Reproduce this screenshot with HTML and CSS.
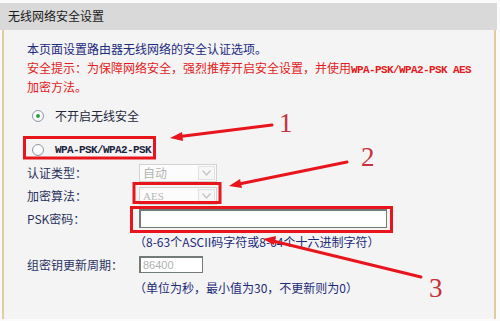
FILE: index.html
```html
<!DOCTYPE html>
<html lang="zh-CN">
<head>
<meta charset="utf-8">
<title>无线网络安全设置</title>
<link rel="stylesheet" href="styles.css">
</head>
<body>
<div class="page">
  <div class="header">无线网络安全设置</div>
  <div class="panel">
    <div class="desc">
      <p class="blue">本页面设置路由器无线网络的安全认证选项。</p>
      <p class="red">安全提示：为保障网络安全，强烈推荐开启安全设置，并使用<span class="mono">WPA-PSK/WPA2-PSK AES</span></p>
      <p class="red">加密方法。</p>
    </div>
    <div class="radio-row first"><span class="radio checked"></span><span class="rlabel">不开启无线安全</span></div>
    <div class="radio-row second"><span class="radio"></span><span class="mono rlabel">WPA-PSK/WPA2-PSK</span></div>
    <div class="form">
      <div class="label">认证类型：</div>
      <div class="field"><span class="select"><span class="val">自动</span><span class="arrow"><svg width="9" height="6" viewBox="0 0 9 6"><polyline points="0.5,0.5 4.5,5 8.5,0.5" fill="none" stroke="#c4c4c4" stroke-width="1.3"/></svg></span></span></div>
      <div class="label">加密算法：</div>
      <div class="field"><span class="select"><span class="val serif">AES</span><span class="arrow"><svg width="9" height="6" viewBox="0 0 9 6"><polyline points="0.5,0.5 4.5,5 8.5,0.5" fill="none" stroke="#c4c4c4" stroke-width="1.3"/></svg></span></span></div>
      <div class="label">PSK密码：</div>
      <div class="field"><span class="input wide"></span></div>
      <div class="label"></div>
      <div class="field hint">（8-63个ASCII码字符或8-64个十六进制字符）</div>
      <div class="label">组密钥更新周期：</div>
      <div class="field"><span class="input short">86400</span></div>
      <div class="label"></div>
      <div class="field hint">（单位为秒，最小值为30，不更新则为0）</div>
    </div>
  </div>
  <svg class="annot" width="500" height="321" viewBox="0 0 500 321">
    <g fill="none" stroke="#e8161c" stroke-width="3">
      <rect x="24.5" y="137.5" width="130" height="20.5"/>
      <rect x="134" y="183.5" width="86" height="19"/>
      <rect x="131.5" y="207.5" width="260" height="24"/>
    </g>
    <g stroke="#e8161c" stroke-width="3" stroke-linecap="round">
      <line x1="272" y1="125" x2="180" y2="136.5"/>
      <line x1="347" y1="162" x2="239" y2="184"/>
      <line x1="421" y1="277" x2="273" y2="241"/>
    </g>
    <g fill="#e8161c">
      <polygon points="170,138 182,132 183,141"/>
      <polygon points="229,186 240,179 242,188"/>
      <polygon points="263,239 276,236 274,245"/>
    </g>
    <g class="num" fill="#c8323a">
      <text x="279" y="132">1</text>
      <text x="361" y="166">2</text>
      <text x="429" y="297">3</text>
    </g>
  </svg>
</div>
</body>
</html>
```

FILE: styles.css
```css
html, body {
  margin: 0;
  padding: 0;
  background: #ffffff;
}
body {
  font-family: "Noto Sans CJK SC", "Noto Sans", sans-serif;
  font-size: 12px;
  color: #222;
}
.page {
  position: relative;
  width: 500px;
  height: 321px;
  padding-top: 3px;
  box-sizing: border-box;
  background: #fbfbfb;
}
.header {
  height: 27px;
  line-height: 25px;
  padding-left: 8px;
  margin-right: 3px;
  background: #d9d9d9;
  color: #1a1a1a;
  font-size: 12px;
}
.panel {
  margin: 0 4px 0 2px;
  border-left: 2px solid #e2cc9f;
  border-right: 2px solid #e2cc9f;
  background: #f4f4f4;
  padding: 9px 0 19px 0;
  height: 289px;
  box-sizing: border-box;
}
.desc {
  padding-left: 23px;
}
.desc p {
  margin: 0;
  line-height: 19px;
  height: 19px;
  white-space: nowrap;
}
.blue { color: #1c2a80; }
.red { color: #e31b22; }
.mono {
  font-family: "Liberation Mono", monospace;
  font-size: 11px;
  letter-spacing: -0.6px;
  font-weight: bold;
}
.radio-row {
  display: flex;
  align-items: center;
  height: 23px;
  padding-left: 28px;
}
.radio-row.first { margin-top: 8px; }
.radio-row.second { margin-top: 11px; }
.radio {
  width: 10px;
  height: 10px;
  border-radius: 50%;
  border: 1px solid #8d9aa6;
  background: radial-gradient(circle at 50% 40%, #ffffff 40%, #e6e9ee 100%);
  margin-right: 11px;
  position: relative;
  flex: none;
}
.radio.checked::after {
  content: "";
  position: absolute;
  left: 3px;
  top: 3px;
  width: 4px;
  height: 4px;
  border-radius: 50%;
  background: #2ea24a;
}
.rlabel { color: #26283a; }
.radio-row.second .rlabel { color: #1e2440; }
.form {
  display: grid;
  grid-template-columns: 112px auto;
  grid-auto-rows: 23px;
  align-items: center;
  padding-left: 23px;
}
.label {
  color: #2a3260;
  white-space: nowrap;
}
.field { display: flex; align-items: center; }
.select {
  display: flex;
  width: 78px;
  height: 18px;
  box-sizing: border-box;
  border: 1px solid #d2d2d2;
  background: #fcfcfc;
}
.select .val {
  flex: 1;
  color: #b3b3b3;
  padding-left: 3px;
  line-height: 16px;
}
.select .val.serif {
  font-family: "Liberation Serif", serif;
  font-size: 11px;
  color: #b8b8b8;
}
.select .arrow {
  width: 15px;
  margin: 1px;
  border: 1px solid #e2e2e2;
  background: #f7f7f7;
  display: flex;
  align-items: center;
  justify-content: center;
}
.input {
  display: block;
  box-sizing: border-box;
  background: #ffffff;
  border: 2px solid #737b78;
  border-right-width: 1px;
  border-bottom-width: 1px;
}
.input.wide { width: 248px; height: 19px; }
.input.short {
  width: 64px;
  height: 17px;
  color: #b0b0b0;
  font-family: "Liberation Sans", sans-serif;
  font-size: 11px;
  line-height: 14px;
  padding-left: 2px;
}
.hint {
  color: #1c2a78;
  margin-left: -5px;
  white-space: nowrap;
}
.annot {
  position: absolute;
  left: 0;
  top: 0;
  pointer-events: none;
}
.num text {
  font-family: "Liberation Serif", serif;
  font-size: 27px;
}
```
